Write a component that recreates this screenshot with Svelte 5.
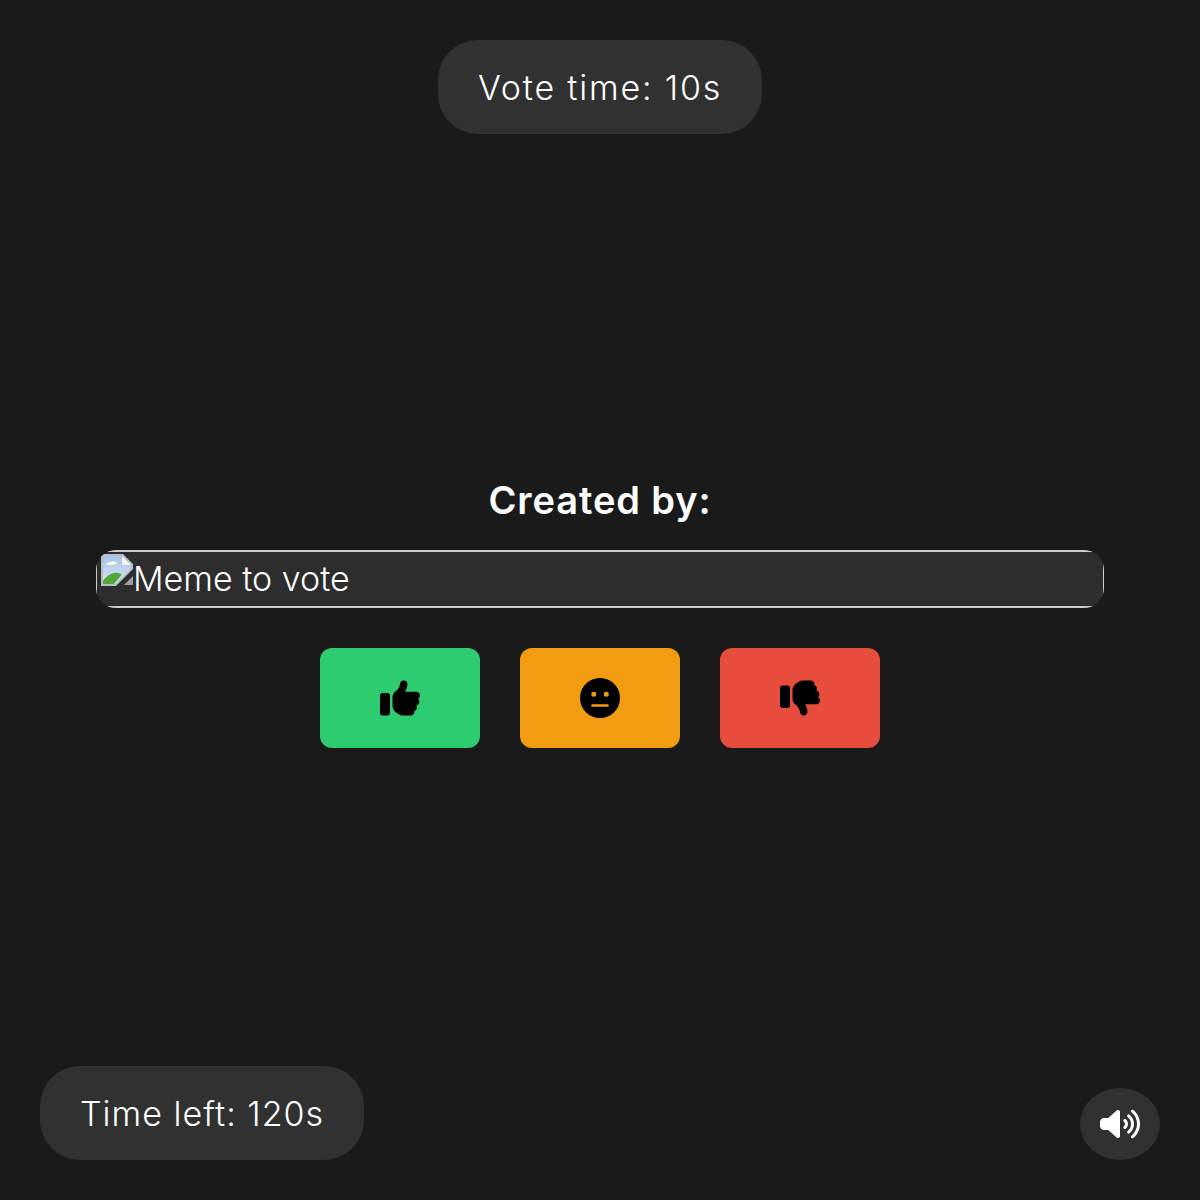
<script>
  const votes = [
    {
      name: 'up',
      viewBox: '0 0 512 512',
      d: 'M313.4 32.9c26 5.2 42.9 30.5 37.7 56.5l-2.3 11.4c-5.3 26.7-15.1 52.1-28.8 75.2H464c26.5 0 48 21.5 48 48c0 18.5-10.5 34.6-25.9 42.6C497 275.4 504 288.9 504 304c0 23.4-16.8 42.9-38.9 47.1c4.4 7.3 6.9 15.8 6.9 24.9c0 21.3-13.9 39.4-33.1 45.6c.7 3.3 1.1 6.8 1.1 10.4c0 26.5-21.5 48-48 48H294.5c-19 0-37.5-5.6-53.3-16.1l-38.5-25.7C176 420.4 160 390.4 160 358.3V320 272 247.1c0-29.2 13.3-56.7 36-75l7.4-5.9c26.5-21.2 44.6-51 51.2-84.2l2.3-11.4c5.2-26 30.5-42.9 56.5-37.7zM32 192H96c17.7 0 32 14.3 32 32V448c0 17.7-14.3 32-32 32H32c-17.7 0-32-14.3-32-32V224c0-17.7 14.3-32 32-32z',
    },
    {
      name: 'meh',
      viewBox: '0 0 512 512',
      d: 'M256 512A256 256 0 1 0 256 0a256 256 0 1 0 0 512zM176.4 176a32 32 0 1 1 0 64 32 32 0 1 1 0-64zm128 32a32 32 0 1 1 64 0 32 32 0 1 1 -64 0zM160 336H352c8.8 0 16 7.2 16 16s-7.2 16-16 16H160c-8.8 0-16-7.2-16-16s7.2-16 16-16z',
    },
    {
      name: 'down',
      viewBox: '0 0 512 512',
      d: 'M313.4 479.1c26-5.2 42.9-30.5 37.7-56.5l-2.3-11.4c-5.3-26.7-15.1-52.1-28.8-75.2H464c26.5 0 48-21.5 48-48c0-18.5-10.5-34.6-25.9-42.6C497 236.6 504 223.1 504 208c0-23.4-16.8-42.9-38.9-47.1c4.4-7.3 6.9-15.8 6.9-24.9c0-21.3-13.9-39.4-33.1-45.6c.7-3.3 1.1-6.8 1.1-10.4c0-26.5-21.5-48-48-48H294.5c-19 0-37.5 5.6-53.3 16.1L202.7 73.8C176 91.6 160 121.6 160 153.7V192v48 24.9c0 29.2 13.3 56.7 36 75l7.4 5.9c26.5 21.2 44.6 51 51.2 84.2l2.3 11.4c5.2 26 30.5 42.9 56.5 37.7zM32 384H96c17.7 0 32-14.3 32-32V128c0-17.7-14.3-32-32-32H32C14.3 96 0 110.3 0 128V352c0 17.7 14.3 32 32 32z',
    },
  ];

  const volume = 'M533.6 32.5C598.5 85.2 640 165.8 640 256s-41.5 170.7-106.4 223.5c-10.3 8.4-25.4 6.8-33.8-3.5s-6.8-25.4 3.5-33.8C557.5 398.2 592 331.2 592 256s-34.5-142.2-88.7-186.3c-10.3-8.4-11.8-23.5-3.5-33.8s23.5-11.8 33.8-3.5zM473.1 107c43.2 35.2 70.9 88.9 70.9 149s-27.7 113.8-70.9 149c-10.3 8.4-25.4 6.8-33.8-3.5s-6.8-25.4 3.5-33.8C475.3 341.3 496 301.1 496 256s-20.7-85.3-53.2-111.8c-10.3-8.4-11.8-23.5-3.5-33.8s23.5-11.8 33.8-3.5zm-60.5 74.5C434.1 199.1 448 225.9 448 256s-13.9 56.9-35.4 74.5c-10.3 8.4-25.4 6.8-33.8-3.5s-6.8-25.4 3.5-33.8C393.1 284.4 400 271 400 256s-6.9-28.4-17.7-37.3c-10.3-8.4-11.8-23.5-3.5-33.8s23.5-11.8 33.8-3.5zM301.1 34.8C312.6 40 320 51.4 320 64V448c0 12.6-7.4 24-18.9 29.2s-25 3.1-34.4-5.3L131.8 352H64c-35.3 0-64-28.7-64-64V224c0-35.3 28.7-64 64-64h67.8L266.7 40.1c9.4-8.4 22.9-10.4 34.4-5.3z';
</script>

<style>
  :global(body) {
    background: #1a1a1a;
    color: #fff;
    font-family: "Inter", "Liberation Sans", sans-serif;
  }

  .page {
    display: flex;
    flex-direction: column;
    justify-content: center;
    align-items: center;
    position: relative;
    height: 100vh;
    padding: 20px 96px 0;
    box-sizing: border-box;
  }

  .pill {
    position: absolute;
    padding: 24px 40px 22px;
    border-radius: 40px;
    background: #313131;
    font-size: 34px;
    font-weight: 300;
    line-height: 48px;
    white-space: nowrap;
  }
  .vote-time {
    top: 40px;
    left: 50%;
    transform: translateX(-50%);
    letter-spacing: 1.8px;
  }
  .time-left {
    left: 40px;
    bottom: 40px;
    letter-spacing: 1px;
  }

  h2 {
    margin: 0 0 23px;
    font-size: 38px;
    font-weight: 600;
    line-height: 54px;
    letter-spacing: 0.9px;
  }

  .meme {
    align-self: stretch;
    height: 58px;
    border-radius: 20px;
    overflow: hidden;
    background: #2d2d2d;
  }
  .meme-inner {
    display: flex;
    height: 100%;
    box-sizing: border-box;
    padding: 2px;
    border: 2px solid #ccc;
    border-width: 2px 1px;
    font-size: 34px;
    font-weight: 300;
    line-height: 50px;
  }
  .broken {
    flex: none;
    width: 32px;
    height: 32px;
    margin-left: 2px;
  }

  .buttons {
    display: flex;
    gap: 40px;
    margin-top: 40px;
  }
  .vote {
    display: flex;
    justify-content: center;
    align-items: center;
    width: 160px;
    height: 100px;
    padding: 0;
    border: none;
    border-radius: 12px;
    cursor: pointer;
  }
  .vote svg {
    width: 40px;
    height: 40px;
  }
  .up { background: #2ecc71; }
  .meh { background: #f39c12; }
  .down { background: #e74c3c; }

  .sound {
    position: absolute;
    right: 40px;
    bottom: 40px;
    display: flex;
    padding: 20px;
    border: none;
    border-radius: 50%;
    background: #313131;
    cursor: pointer;
  }
  .sound svg {
    width: 40px;
    height: 32px;
  }
</style>

<div class="page">
  <div class="pill vote-time">Vote time: 10s</div>

  <h2>Created by:</h2>

  <div class="meme">
    <div class="meme-inner">
      <svg class="broken" viewBox="0 0 16 16" aria-hidden="true">
        <defs>
          <linearGradient id="sky" x1="0" y1="0" x2="0" y2="1">
            <stop offset="0" stop-color="#a9c4e8" />
            <stop offset="1" stop-color="#dbe6f3" />
          </linearGradient>
        </defs>
        <path d="M0 0h11l5 5v2.500L7.500 16H0z" fill="#b9bdc4" />
        <path d="M1 1h9.500v4.500H15v2L7 15H1z" fill="url(#sky)" />
        <path d="M3 5.200c0-.9 1-1.500 2-1.100C6 3.200 8 3.600 8 4.800 8 5.500 3 5.700 3 5.200z" fill="#fff" />
        <path d="M1 13.500C3 10.500 6 9 8.500 9.500l2 .8L6.500 15H1z" fill="#4ea83a" />
        <path d="M10.500 1v4.500H15z" fill="#f4f6fa" />
        <path d="M16 11v4.500H11.500z" fill="#9a9ea5" />
      </svg>
      <span>Meme to vote</span>
    </div>
  </div>

  <div class="buttons">
    {#each votes as vote}
      <button class="vote {vote.name}" aria-label={vote.name}>
        <svg viewBox={vote.viewBox}><path d={vote.d} /></svg>
      </button>
    {/each}
  </div>

  <div class="pill time-left">Time left: 120s</div>

  <button class="sound" aria-label="sound">
    <svg viewBox="0 0 640 512"><path d={volume} fill="#fff" /></svg>
  </button>
</div>
